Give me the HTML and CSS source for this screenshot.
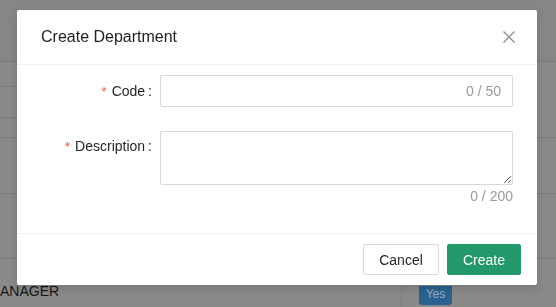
FILE: index.html
```html
<!DOCTYPE html>
<html lang="en">
<head>
<meta charset="utf-8">
<title>Create Department</title>
<link rel="stylesheet" href="styles.css">
</head>
<body>
<div class="page">
  <div class="row row-head"></div>
  <div class="row row-split">
    <div class="side">
      <div class="side-cell h25"></div>
      <div class="side-cell h31"></div>
      <div class="side-cell h20"></div>
    </div>
  </div>
  <div class="row h56"></div>
  <div class="row h65"></div>
  <div class="row row-last">
    <div class="cell-name">ANAGER</div>
    <div class="cell-flag"><span class="badge">Yes</span></div>
  </div>
</div>

<div class="mask"></div>

<div class="modal" role="dialog" aria-label="Create Department">
  <div class="modal-header">
    <div class="modal-title">Create Department</div>
    <button class="modal-close" aria-label="Close">
      <svg width="12" height="12" viewBox="0 0 12 12"><path d="M0.5 0.5 L11.5 11.5 M11.5 0.5 L0.5 11.5" stroke="#8c8c8c" stroke-width="1.3" fill="none"/></svg>
    </button>
  </div>
  <div class="modal-body">
    <div class="form-item">
      <label class="form-label"><span class="req">*</span>Code<span class="colon">:</span></label>
      <div class="form-control">
        <div class="input-wrap">
          <input class="input" type="text">
          <span class="suffix">0 / 50</span>
        </div>
      </div>
    </div>
    <div class="form-item item-desc">
      <label class="form-label"><span class="req">*</span>Description<span class="colon">:</span></label>
      <div class="form-control">
        <textarea class="textarea"></textarea>
        <div class="count">0 / 200</div>
      </div>
    </div>
  </div>
  <div class="modal-footer">
    <button class="btn btn-default">Cancel</button>
    <button class="btn btn-primary">Create</button>
  </div>
</div>
</body>
</html>
```

FILE: styles.css
```css
html, body {
  margin: 0;
  padding: 0;
}
body {
  width: 556px;
  height: 307px;
  overflow: hidden;
  background: #898989;
  font-family: "Liberation Sans", Arial, Helvetica, sans-serif;
  font-size: 14px;
  color: #262626;
}

/* background page (already dimmed) */
.page {
  display: flex;
  flex-direction: column;
}
.row {
  border-bottom: 1px solid #7b7b7b;
}
.row-head { height: 61px; background: #868686; }
.row-split { height: 75px; }
.side {
  width: 17px;
  display: flex;
  flex-direction: column;
}
.side-cell { border-bottom: 1px solid #7b7b7b; }
.h25 { height: 24px; }
.h31 { height: 30px; }
.h20 { height: 20px; border-bottom: none; }
.h56 { height: 55px; }
.h65 { height: 64px; }
.row-last {
  height: 48px;
  border-bottom: none;
  display: flex;
  align-items: flex-start;
}
.cell-name {
  width: 402px;
  height: 26px;
  margin-top: 22px;
  font-size: 14px;
  line-height: 20px;
  color: #161616;
  border-right: 1px solid #7f7f7f;
  box-sizing: border-box;
}
.cell-flag {
  margin-top: 27px;
  padding-left: 17px;
}
.badge {
  display: block;
  width: 33px;
  height: 19px;
  background: #2b6190;
  color: #93acc4;
  font-size: 12px;
  line-height: 16px;
  text-align: center;
  border-radius: 0 0 3px 3px;
}

.mask {
  position: fixed;
  inset: 0;
  background: rgba(0, 0, 0, 0);
}

/* modal */
.modal {
  position: absolute;
  left: 17px;
  top: 10px;
  width: 520px;
  background: #fff;
  border-radius: 2px;
  box-shadow: 0 3px 8px rgba(0, 0, 0, 0.15);
}
.modal-header {
  height: 54px;
  padding: 0 22px 0 24px;
  display: flex;
  align-items: center;
  justify-content: space-between;
  border-bottom: 1px solid #efefef;
}
.modal-title {
  font-size: 16px;
  color: #222;
}
.modal-close {
  border: none;
  background: transparent;
  padding: 0;
  width: 12px;
  height: 12px;
  display: flex;
}
.modal-body {
  padding: 10px 24px 26px;
}
.form-item {
  display: flex;
}
.item-desc { margin-top: 24px; }
.form-label {
  width: 119px;
  flex: none;
  box-sizing: border-box;
  padding-right: 8px;
  text-align: right;
  height: 32px;
  line-height: 32px;
  color: #262626;
  white-space: nowrap;
}
.item-desc .form-label { line-height: 31px; }
.req {
  color: #ff4d4f;
  margin-right: 5px;
  font-size: 13px;
}
.colon { margin-left: 3px; }
.form-control {
  flex: 1;
  min-width: 0;
}
.input-wrap {
  height: 32px;
  box-sizing: border-box;
  border: 1px solid #d9d9d9;
  border-radius: 2px;
  display: flex;
  align-items: center;
  padding: 0 11px;
}
.input {
  flex: 1;
  border: none;
  outline: none;
  height: 28px;
  padding: 0;
  font: inherit;
  background: transparent;
}
.suffix {
  color: #9a9a9a;
  font-size: 14px;
}
.textarea {
  display: block;
  width: 100%;
  height: 54px;
  box-sizing: border-box;
  border: 1px solid #d9d9d9;
  border-radius: 2px;
  padding: 4px 11px;
  font: inherit;
  resize: vertical;
  outline: none;
}
.count {
  text-align: right;
  color: #9a9a9a;
  line-height: 22px;
}
.modal-footer {
  border-top: 1px solid #efefef;
  height: 51px;
  padding: 0 16px;
  display: flex;
  align-items: center;
  justify-content: flex-end;
  gap: 8px;
}
.btn {
  height: 31px;
  padding: 0 15px;
  font-family: inherit;
  font-size: 14px;
  border-radius: 2px;
  box-sizing: border-box;
}
.btn-default {
  width: 76px;
  background: #fff;
  border: 1px solid #d9d9d9;
  color: #262626;
}
.btn-primary {
  width: 74px;
  background: #23996b;
  border: 1px solid #23996b;
  color: #fff;
}
```
